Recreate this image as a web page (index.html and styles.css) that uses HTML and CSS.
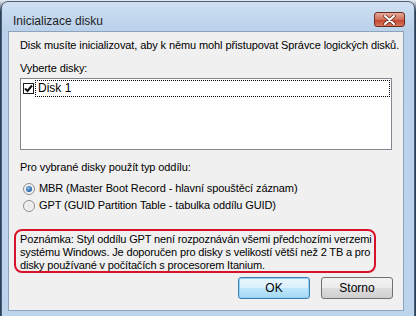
FILE: index.html
```html
<html>
<head>
<meta name="viewport" content="width=device-width, initial-scale=1.0">
<link rel="stylesheet" href="styles.css">
</head>
<body>
<div class="window">
	<div class="titlebar">
		<span class="title">Inicializace disku</span>
		<div class="close">
			<svg width="13" height="10" viewBox="0 0 13 10">
				<path d="M2 1 L11 9 M11 1 L2 9" stroke="#5a2418" stroke-width="3.4" stroke-linecap="round"/>
				<path d="M2 1 L11 9 M11 1 L2 9" stroke="#fff" stroke-width="2" stroke-linecap="round"/>
			</svg>
		</div>
	</div>
	<div class="client">
		<p class="intro">Disk musíte inicializovat, aby k němu mohl přistupovat Správce logických disků.</p>
		<p class="lbl">Vyberte disky:</p>
		<div class="listbox">
			<div class="row">
				<span class="check">
					<svg width="9" height="9" viewBox="0 0 9 9"><path d="M1 4.5 L3.5 7 L8 1.5" stroke="#111" stroke-width="2" fill="none"/></svg>
				</span>
				<span class="focus">Disk 1</span>
			</div>
		</div>
		<p class="lbl2">Pro vybrané disky použít typ oddílu:</p>
		<div class="radio first"><span class="dot on"></span>MBR (Master Boot Record - hlavní spouštěcí záznam)</div>
		<div class="radio"><span class="dot"></span>GPT (GUID Partition Table - tabulka oddílu GUID)</div>
		<div class="note">Poznámka: Styl oddílu GPT není rozpoznáván všemi předchozími verzemi<br>systému Windows. Je doporučen pro disky s velikostí větší než 2 TB a pro<br>disky používané v počítačích s procesorem Itanium.</div>
		<div class="buttons">
			<div class="btn default">OK</div>
			<div class="btn">Storno</div>
		</div>
	</div>
</div>
</body>
</html>
```

FILE: styles.css
```css
body {
	margin: 0;
	background: linear-gradient(#e9eef3, #2b3f57 12px);
	font-family: "Liberation Sans", Arial, sans-serif;
	font-size: 11px;
	letter-spacing: -0.1px;
	color: #000;
}

.window {
	margin: 1px 0 0 1px;
	width: 414px;
	box-sizing: border-box;
	border: 1px solid #4b5f76;
	border-radius: 7px 7px 0 0;
	background: linear-gradient(#cfe0f1, #b9d1ea 30px, #bcd4ec);
	padding: 0 10px 6px 6px;
}

.titlebar {
	height: 29px;
	display: flex;
	align-items: flex-start;
	justify-content: space-between;
	padding-left: 5px;
}

.title {
	font-size: 12px;
	letter-spacing: 0;
	color: #1e1e1e;
	margin-top: 12px;
}

.close {
	width: 31px;
	height: 15px;
	box-sizing: border-box;
	margin-top: 10px;
	margin-right: -1px;
	border: 1px solid #6b2d20;
	border-radius: 3px;
	background: linear-gradient(#e8a99a, #d0705a 50%, #c2412a 51%, #d6775c);
	display: flex;
	align-items: center;
	justify-content: center;
}

.client {
	width: 396px;
	box-sizing: border-box;
	background: #f0f0f0;
	border: 1px solid #8da3bb;
	padding: 7px 10px 11px 11px;
	line-height: 13px;
}

.client p {
	margin: 0;
	white-space: nowrap;
}

.client p.lbl {
	margin-top: 10px;
}

.listbox {
	margin-top: 3px;
	width: 372px;
	height: 72px;
	box-sizing: border-box;
	border: 1px solid #828790;
	background: #fff;
	padding: 1px 1px 0 2px;
}

.row {
	display: flex;
	align-items: center;
	height: 17px;
}

.check {
	width: 11px;
	height: 11px;
	box-sizing: border-box;
	border: 1px solid #1c1c1c;
	background: #fff;
	display: flex;
	align-items: center;
	justify-content: center;
	margin-right: 1px;
}

.focus {
	flex: 1;
	height: 17px;
	box-sizing: border-box;
	border: 1px dotted #000;
	padding-left: 2px;
	line-height: 15px;
	font-size: 12px;
	letter-spacing: 0;
}

.client p.lbl2 {
	margin-top: 11px;
}

.radio {
	display: flex;
	align-items: center;
	height: 17px;
	padding-left: 3px;
	white-space: nowrap;
}

.radio.first {
	margin-top: 6px;
}

.dot {
	width: 12px;
	height: 12px;
	box-sizing: border-box;
	border: 1px solid #8e8f8f;
	border-radius: 50%;
	background: radial-gradient(circle, #e6e6e6, #f8f8f8);
	margin-right: 4px;
	position: relative;
}

.dot.on::after {
	content: "";
	position: absolute;
	left: 2px;
	top: 2px;
	width: 6px;
	height: 6px;
	border-radius: 50%;
	background: radial-gradient(circle at 40% 35%, #8bc0ec, #1f5fa3 70%);
}

.note {
	margin: 15px 0 0 -6px;
	width: 362px;
	box-sizing: border-box;
	border: 2px solid #d9122c;
	border-radius: 8px;
	padding: 2px 0 0 4px;
	height: 44px;
	white-space: nowrap;
	letter-spacing: -0.15px;
}

.buttons {
	display: flex;
	justify-content: flex-end;
	gap: 11px;
	margin-top: 4px;
}

.btn {
	width: 72px;
	height: 22px;
	box-sizing: border-box;
	border: 1px solid #707070;
	border-radius: 3px;
	background: linear-gradient(#f2f2f2, #ebebeb 50%, #dddddd 51%, #cfcfcf);
	display: flex;
	align-items: center;
	justify-content: center;
	font-size: 12px;
	letter-spacing: 0;
}

.btn.default {
	border-color: #3c7fb1;
	background: linear-gradient(#eaf6fd, #d9f0fc 50%, #bee6fd 51%, #a7d9f5);
	box-shadow: inset 0 0 0 1px #94d2f3;
}
```
